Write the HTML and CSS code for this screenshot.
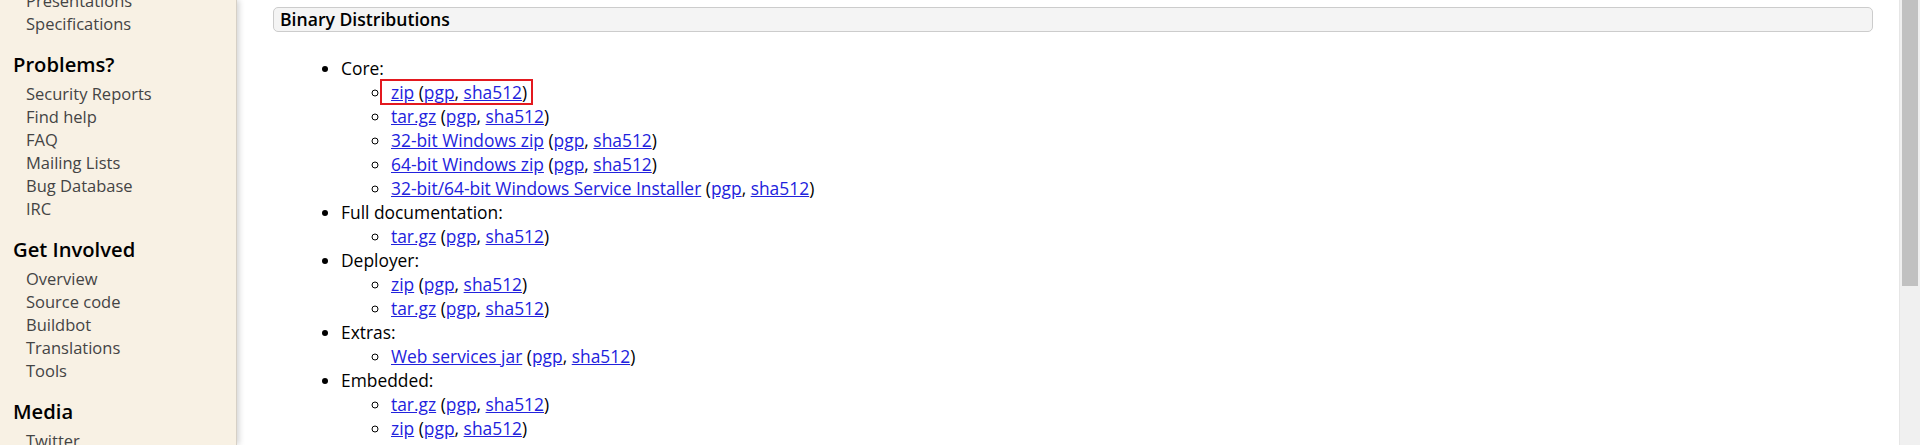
FILE: index.html
```html
<!DOCTYPE html>
<html lang="en">
<head>
<meta charset="utf-8">
<title>Apache Tomcat - Downloads</title>
<link rel="stylesheet" href="styles.css">
</head>
<body>
<div class="page">
  <aside class="sidebar">
    <div class="side-section first">
      <ul class="side-links">
        <li><a href="#">Presentations</a></li>
        <li><a href="#">Specifications</a></li>
      </ul>
    </div>
    <div class="side-section">
      <h2 class="side-title">Problems?</h2>
      <ul class="side-links">
        <li><a href="#">Security Reports</a></li>
        <li><a href="#">Find help</a></li>
        <li><a href="#">FAQ</a></li>
        <li><a href="#">Mailing Lists</a></li>
        <li><a href="#">Bug Database</a></li>
        <li><a href="#">IRC</a></li>
      </ul>
    </div>
    <div class="side-section">
      <h2 class="side-title">Get Involved</h2>
      <ul class="side-links">
        <li><a href="#">Overview</a></li>
        <li><a href="#">Source code</a></li>
        <li><a href="#">Buildbot</a></li>
        <li><a href="#">Translations</a></li>
        <li><a href="#">Tools</a></li>
      </ul>
    </div>
    <div class="side-section">
      <h2 class="side-title">Media</h2>
      <ul class="side-links">
        <li><a href="#">Twitter</a></li>
      </ul>
    </div>
  </aside>

  <main class="content">
    <h3 class="section-title">Binary Distributions</h3>
    <ul class="dist-list">
      <li>Core:
        <ul>
          <li><span class="highlight"><a href="#">zip</a> (<a href="#">pgp</a>, <a href="#">sha512</a>)</span></li>
          <li><a href="#">tar.gz</a> (<a href="#">pgp</a>, <a href="#">sha512</a>)</li>
          <li><a href="#">32-bit Windows zip</a> (<a href="#">pgp</a>, <a href="#">sha512</a>)</li>
          <li><a href="#">64-bit Windows zip</a> (<a href="#">pgp</a>, <a href="#">sha512</a>)</li>
          <li><a href="#">32-bit/64-bit Windows Service Installer</a> (<a href="#">pgp</a>, <a href="#">sha512</a>)</li>
        </ul>
      </li>
      <li>Full documentation:
        <ul>
          <li><a href="#">tar.gz</a> (<a href="#">pgp</a>, <a href="#">sha512</a>)</li>
        </ul>
      </li>
      <li>Deployer:
        <ul>
          <li><a href="#">zip</a> (<a href="#">pgp</a>, <a href="#">sha512</a>)</li>
          <li><a href="#">tar.gz</a> (<a href="#">pgp</a>, <a href="#">sha512</a>)</li>
        </ul>
      </li>
      <li>Extras:
        <ul>
          <li><a href="#">Web services jar</a> (<a href="#">pgp</a>, <a href="#">sha512</a>)</li>
        </ul>
      </li>
      <li>Embedded:
        <ul>
          <li><a href="#">tar.gz</a> (<a href="#">pgp</a>, <a href="#">sha512</a>)</li>
          <li><a href="#">zip</a> (<a href="#">pgp</a>, <a href="#">sha512</a>)</li>
        </ul>
      </li>
    </ul>
  </main>

  <div class="scrollbar">
    <div class="scroll-thumb"></div>
  </div>
</div>
</body>
</html>
```

FILE: styles.css
```css
html, body {
  margin: 0;
  padding: 0;
  height: 100%;
  overflow: hidden;
  background: #ffffff;
}

body {
  font-family: "Open Sans", "Liberation Sans", sans-serif;
  color: #000;
}

.page {
  display: flex;
  height: 445px;
  overflow: hidden;
}

/* ---------- sidebar ---------- */
.sidebar {
  width: 236px;
  flex: 0 0 236px;
  background: #f8f1e4;
  border-right: 1px solid #d6d0c6;
  box-shadow: 2px 0 6px rgba(0, 0, 0, 0.18);
  position: relative;
  z-index: 1;
}

.side-section.first {
  margin-top: -11px;
}

.side-title {
  margin: 15px 0 4px 13px;
  font-size: 20.2px;
  line-height: 28px;
  font-weight: 600;
  color: #000;
}

.side-links {
  list-style: none;
  margin: 0;
  padding: 0 0 0 26px;
}

.side-links li {
  font-size: 16.5px;
  line-height: 23px;
}

.side-links a {
  color: #444;
  text-decoration: none;
}

/* ---------- main content ---------- */
.content {
  flex: 1 1 auto;
  padding: 7px 26px 0 36px;
  min-width: 0;
}

.section-title {
  margin: 0;
  height: 23px;
  line-height: 23px;
  padding: 0 6px;
  background: #f4f4f4;
  border: 1px solid #cccccc;
  border-radius: 5px;
  font-size: 17.6px;
  font-weight: 600;
  color: #000;
}

.dist-list {
  margin: 24px 0 0 0;
  padding: 0 0 0 68px;
  font-size: 17.4px;
  line-height: 24px;
  list-style: disc;
}

.dist-list ul {
  margin: 0;
  padding: 0 0 0 50px;
  list-style: circle;
}

.dist-list a {
  color: #2222dd;
  text-decoration: underline;
}

.highlight {
  position: relative;
}

.highlight::after {
  content: "";
  position: absolute;
  left: -11px;
  right: -6px;
  top: -1px;
  bottom: -1px;
  border: 2px solid #e3191f;
  pointer-events: none;
}

/* ---------- fake scrollbar ---------- */
.scrollbar {
  flex: 0 0 21px;
  width: 21px;
  background: #f0f0f0;
  border-left: 1px solid #e6e6e6;
  box-sizing: border-box;
  padding: 0 2px 0 2px;
}

.scroll-thumb {
  height: 286px;
  background: #c1c1c1;
}
```
